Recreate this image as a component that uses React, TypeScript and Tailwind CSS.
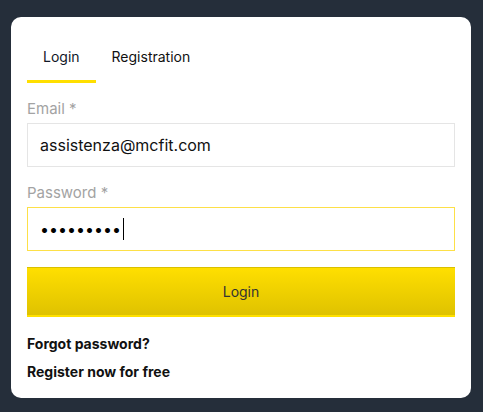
export default function App() {
  return (
    <div
      className="min-h-[412px] w-full bg-[#252e3a] pt-[17px] pl-[11px]"
      style={{ fontFamily: "Inter, 'Noto Sans', sans-serif" }}
    >
      <div className="w-[460px] h-[381px] bg-white rounded-[10px] px-4 pt-4">
        {/* Tabs */}
        <div className="flex">
          <div className="h-[50px] px-4 flex items-center border-b-[3px] border-[#ffdf00] text-[14px] text-[#111827]">
            Login
          </div>
          <div className="h-[50px] px-4 flex items-center border-b-[3px] border-transparent text-[14px] text-[#111]">
            Registration
          </div>
        </div>

        {/* Email */}
        <label className="block mt-4 text-[15px] leading-5 text-[#a3a3a3]">Email *</label>
        <div className="mt-1 h-[44px] border border-[#e5e5e5] flex items-center px-3 text-[16px] text-[#111]">
          assistenza@mcfit.com
        </div>

        {/* Password */}
        <label className="block mt-4 text-[15px] leading-5 text-[#a3a3a3]">Password *</label>
        <div className="mt-1 h-[44px] border border-[#fde047] flex items-center px-3 text-[16px] text-black">
          <span>•••••••••</span>
          <span className="ml-[2px] w-[1px] h-[22px] bg-black" />
        </div>

        {/* Submit */}
        <button className="mt-4 w-full h-[50px] border-t border-t-[#d9c000] border-b-2 border-b-[#ffe000] bg-gradient-to-b from-[#ffdf00] to-[#dfc200] text-[14px] text-[#333]">
          Login
        </button>

        {/* Links */}
        <div className="mt-[17px] flex flex-col gap-2 text-[14px] font-bold text-[#111]">
          <a className="leading-5">Forgot password?</a>
          <a className="leading-5">Register now for free</a>
        </div>
      </div>
    </div>
  );
}
